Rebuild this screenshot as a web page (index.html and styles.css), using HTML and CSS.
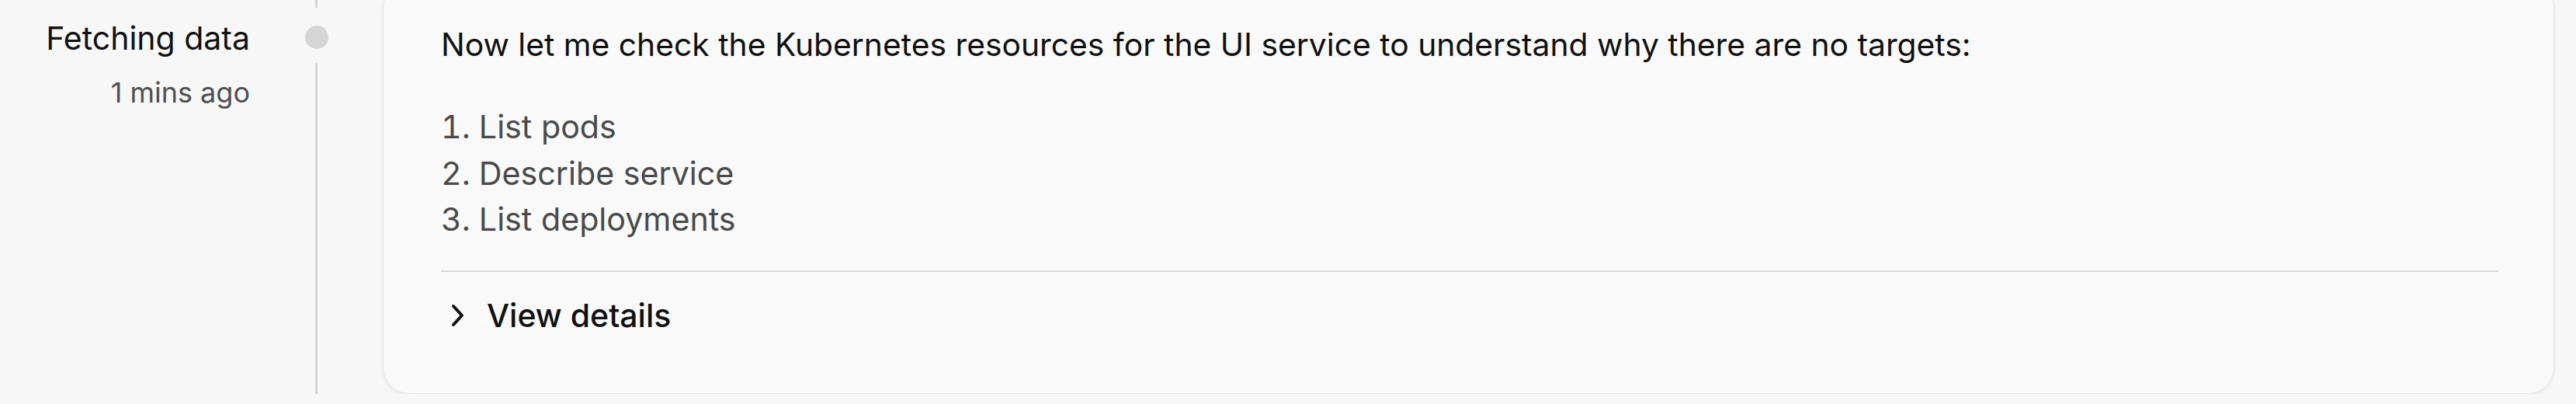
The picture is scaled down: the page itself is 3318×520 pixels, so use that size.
FILE: index.html
```html
<!DOCTYPE html>
<html lang="en">
<head>
<meta charset="utf-8">
<title>Timeline step</title>
<link rel="stylesheet" href="styles.css">
</head>
<body>
<div class="timeline">
  <div class="item">
    <div class="meta">
      <div class="title">Fetching data</div>
      <div class="time">1 mins ago</div>
    </div>
    <div class="rail">
      <span class="seg seg-top"></span>
      <span class="dot"></span>
      <span class="seg seg-bottom"></span>
    </div>
    <div class="card">
      <p class="lead">Now let me check the Kubernetes resources for the UI service to understand why there are no targets:</p>
      <ol class="steps">
        <li>List pods</li>
        <li>Describe service</li>
        <li>List deployments</li>
      </ol>
      <div class="divider"></div>
      <button class="toggle" type="button">
        <svg class="chev" width="20" height="30" viewBox="0 0 20 30" aria-hidden="true"><polyline points="4,3 15,15 4,27" fill="none" stroke="#111" stroke-width="4" stroke-linecap="round" stroke-linejoin="round"/></svg>
        <span>View details</span>
      </button>
    </div>
  </div>
</div>
</body>
</html>
```

FILE: styles.css
```css
html, body {
  margin: 0;
  padding: 0;
  background: #f7f7f7;
  overflow: hidden;
}
body {
  font-family: Inter, "Noto Sans", sans-serif;
  color: #111;
}
.timeline {
  margin-top: -24px;
}
.item {
  display: flex;
  align-items: stretch;
  margin-right: 28px;
}
.meta {
  width: 322px;
  flex: none;
  text-align: right;
  padding-top: 49px;
}
.title {
  font-size: 41px;
  line-height: 48px;
  color: #111;
}
.time {
  margin-top: 24px;
  font-size: 36px;
  line-height: 44px;
  color: #4f4f4f;
}
.rail {
  width: 171px;
  flex: none;
  display: flex;
  flex-direction: column;
  align-items: center;
}
.seg {
  width: 3px;
  background: #d4d4d4;
}
.seg-top {
  height: 34px;
}
.seg-bottom {
  flex: 1;
}
.dot {
  width: 30px;
  height: 30px;
  border-radius: 50%;
  background: #d6d6d6;
  margin: 23px 0 18px;
}
.card {
  flex: 1;
  background: #f9f9f9;
  border: 1px solid #e6e6e6;
  border-radius: 34px;
  box-shadow: 0 2px 5px rgba(0, 0, 0, 0.07);
  padding: 50px 71px 70px 74px;
}
.lead {
  margin: 0;
  font-size: 40.8px;
  line-height: 60px;
  color: #111;
}
.steps {
  margin: 47px 0 0;
  padding: 0;
  list-style: decimal inside;
  font-size: 41.2px;
  line-height: 59.5px;
  color: #4a4a4a;
}
.divider {
  margin-top: 35.5px;
  height: 2px;
  background: #d6d6d6;
}
.toggle {
  margin-top: 26px;
  display: flex;
  align-items: center;
  padding: 0;
  border: 0;
  background: none;
  font-family: inherit;
  font-size: 41px;
  line-height: 60px;
  font-weight: 500;
  color: #111;
  cursor: pointer;
}
.chev {
  margin-left: 12px;
  margin-right: 27px;
}
```
